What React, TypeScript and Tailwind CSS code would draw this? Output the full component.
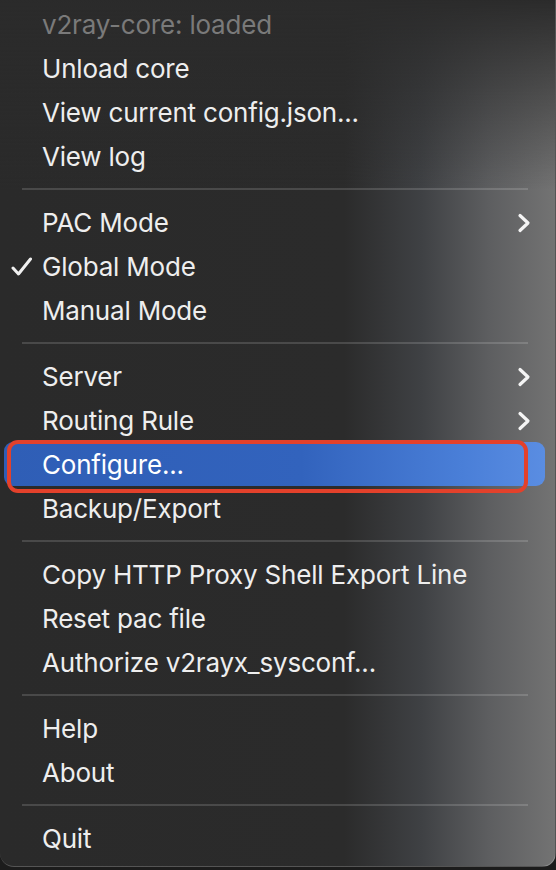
import React from 'react';

type Item =
  | { kind: 'sep' }
  | { kind: 'item'; label: string; disabled?: boolean; checked?: boolean; submenu?: boolean; active?: boolean };

const items: Item[] = [
  { kind: 'item', label: 'v2ray-core: loaded', disabled: true },
  { kind: 'item', label: 'Unload core' },
  { kind: 'item', label: 'View current config.json...' },
  { kind: 'item', label: 'View log' },
  { kind: 'sep' },
  { kind: 'item', label: 'PAC Mode', submenu: true },
  { kind: 'item', label: 'Global Mode', checked: true },
  { kind: 'item', label: 'Manual Mode' },
  { kind: 'sep' },
  { kind: 'item', label: 'Server', submenu: true },
  { kind: 'item', label: 'Routing Rule', submenu: true },
  { kind: 'item', label: 'Configure...', active: true },
  { kind: 'item', label: 'Backup/Export' },
  { kind: 'sep' },
  { kind: 'item', label: 'Copy HTTP Proxy Shell Export Line' },
  { kind: 'item', label: 'Reset pac file' },
  { kind: 'item', label: 'Authorize v2rayx_sysconf...' },
  { kind: 'sep' },
  { kind: 'item', label: 'Help' },
  { kind: 'item', label: 'About' },
  { kind: 'sep' },
  { kind: 'item', label: 'Quit' },
];

const Check = () => (
  <svg width="22" height="20" viewBox="0 0 22 20" className="absolute left-[7px] top-[13px]">
    <path d="M2 11 L7.5 17 L19.5 2" fill="none" stroke="#f0f0f0" strokeWidth="3" strokeLinecap="round" strokeLinejoin="round" />
  </svg>
);

const Chevron = () => (
  <svg width="14" height="20" viewBox="0 0 14 20" className="absolute right-[14px] top-[13px]">
    <path d="M3 2.5 L11 10 L3 17.5" fill="none" stroke="#f4f4f4" strokeWidth="3.2" strokeLinecap="round" strokeLinejoin="round" />
  </svg>
);

export default function App() {
  return (
    <div className="w-[556px] h-[870px] bg-[#1c1c1c] overflow-hidden" style={{ fontFamily: 'Inter, "Noto Sans", sans-serif' }}>
      <div className="relative w-[556px] h-[867px] rounded-b-[14px] border-r border-b border-white/20 bg-[#2a2a2a] bg-[image:linear-gradient(to_bottom,#2b2b2b_0%,rgba(43,43,43,0)_22%),linear-gradient(to_right,#2a2a2a_0%,#2b2b2b_62%,#3f4144_76%,#5d5e60_88%,#737373_100%)] pt-[2px] pl-[4px] pr-[10px]">
        {items.map((it, i) =>
          it.kind === 'sep' ? (
            <div key={i} className="h-[22px] flex items-center pl-[18px] pr-[17px]">
              <div className="h-[2px] w-full bg-white/15" />
            </div>
          ) : (
            <div
              key={i}
              className={
                'relative h-[44px] flex items-center pl-[38px] pt-[2px] text-[26px] tracking-[-0.2px] ' +
                (it.disabled ? 'text-[#7a7a7a] ' : 'text-[#eeeeee] ') +
                (it.active
                  ? 'rounded-[9px] bg-[image:linear-gradient(to_right,#2f5eb6_0%,#3263bd_55%,#4a7fd8_85%,#5a8de2_100%)] text-white'
                  : '')
              }
            >
              {it.checked && <Check />}
              <span className="leading-none">{it.label}</span>
              {it.submenu && <Chevron />}
              {it.active && (
                <div className="absolute left-[3px] right-[17px] -top-[2px] -bottom-[7px] rounded-[11px] border-[4px] border-[#e3412b]" />
              )}
            </div>
          )
        )}
      </div>
    </div>
  );
}
